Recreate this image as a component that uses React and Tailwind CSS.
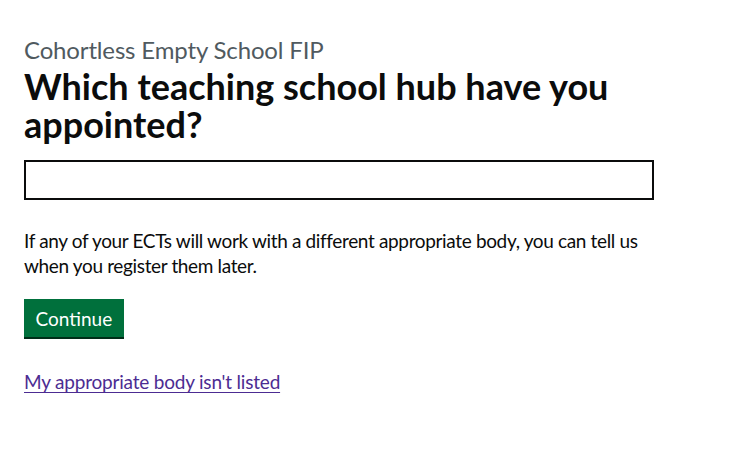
export default function App() {
  return (
    <div className="min-h-screen bg-white text-[#0b0c0c] font-['Lato','Liberation_Sans',Arial,sans-serif]">
      <main className="px-6 pt-[35px]">
        <span className="block text-[24px] leading-[30px] text-[#505a5f] mb-[2px] tracking-[-0.15px]">Cohortless Empty School FIP</span>
        <h1 className="text-[36px] leading-[38px] font-bold mb-[17px] max-w-[630px]">
          Which teaching school hub have you appointed?
        </h1>
        <input
          type="text"
          aria-label="Teaching school hub"
          className="block w-[630px] h-[40px] border-2 border-[#0b0c0c] px-2 text-[19px] outline-none"
        />
        <p className="mt-[28px] mb-[21px] text-[19px] leading-[25px] tracking-[-0.35px] max-w-[630px]">
          If any of your ECTs will work with a different appropriate body, you can tell us when you register them later.
        </p>
        <button className="bg-[#00703c] text-white text-[19px] leading-[19px] px-[9.5px] pt-2 pb-[7px] border-2 border-transparent shadow-[0_2px_0_#002d18] mb-[32px]">
          Continue
        </button>
        <p className="text-[19px] leading-[25px] tracking-[-0.2px]">
          <a href="#" className="text-[#4c2c92] underline underline-offset-[3px] decoration-1">My appropriate body isn't listed</a>
        </p>
      </main>
    </div>
  );
}
